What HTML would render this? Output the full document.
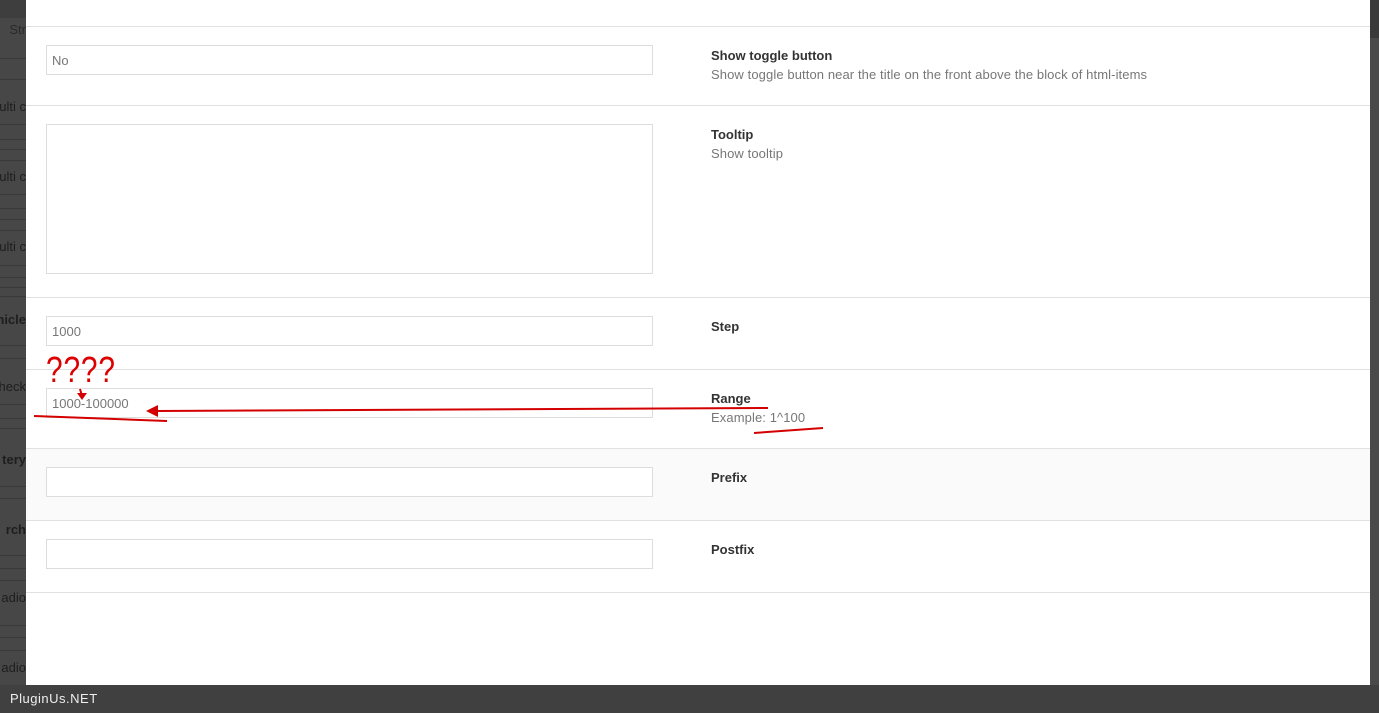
<!DOCTYPE html>
<html style="background:#474747"><head><meta charset="utf-8"><style>
*{margin:0;padding:0;box-sizing:border-box}
body{width:1379px;height:713px;overflow:hidden;background:#474747;font-family:"Liberation Sans",sans-serif;position:relative}
.l{position:absolute;left:0;width:26px;height:1px;background:#393939}
.lt{position:absolute;left:0;width:26px;font-size:13px;color:#1e1e1e;white-space:nowrap;overflow:hidden;direction:rtl;text-align:right}
.modal{position:absolute;left:26px;top:0;width:1344px;height:685px;background:#fff}
.sep{position:absolute;left:0;width:1344px;height:1px;background:#e1e1e1}
.in{position:absolute;left:20px;width:607px;height:30px;border:1px solid #ddd;background:#fff;font-size:13px;color:#777;padding:7px 5px}
.t{position:absolute;left:685px;font-size:13px;font-weight:bold;color:#333}
.d{position:absolute;left:685px;font-size:13px;color:#777;letter-spacing:0.1px}
.bar{position:absolute;left:0;top:685px;width:1379px;height:28px;background:#404040;color:#eee;font-size:13px;padding:6px 10px;letter-spacing:0.5px}
</style></head><body>
<div style="position:absolute;left:0;top:0;width:26px;height:685px;background-color:#474747"></div>
<div style="position:absolute;left:0;top:0;width:26px;height:18px;background:#3e3e3e"></div>
<div class="lt" style="top:22px;color:#2a2a2a">Str</div>
<div class="l" style="top:58px"></div><div class="l" style="top:79px"></div>
<div class="lt" style="top:99px">ulti c</div>
<div class="l" style="top:124px"></div><div class="l" style="top:139px"></div><div class="l" style="top:149px"></div><div class="l" style="top:160px"></div>
<div class="lt" style="top:169px">ulti c</div>
<div class="l" style="top:194px"></div><div class="l" style="top:208px"></div><div class="l" style="top:219px"></div><div class="l" style="top:230px"></div>
<div class="lt" style="top:239px">ulti c</div>
<div class="l" style="top:265px"></div><div class="l" style="top:277px"></div><div class="l" style="top:287px"></div><div class="l" style="top:296px"></div>
<div class="lt" style="top:312px;font-weight:bold">hicle</div>
<div class="l" style="top:345px"></div><div class="l" style="top:358px"></div>
<div class="lt" style="top:379px">heck</div>
<div class="l" style="top:404px"></div><div class="l" style="top:418px"></div><div class="l" style="top:428px"></div>
<div class="lt" style="top:452px;font-weight:bold">tery</div>
<div class="l" style="top:486px"></div><div class="l" style="top:498px"></div>
<div class="lt" style="top:522px;font-weight:bold">rch</div>
<div class="l" style="top:555px"></div><div class="l" style="top:568px"></div><div class="l" style="top:580px"></div>
<div class="lt" style="top:590px">adio</div>
<div class="l" style="top:625px"></div><div class="l" style="top:637px"></div><div class="l" style="top:650px"></div>
<div class="lt" style="top:660px">adio</div>
<div style="position:absolute;left:1370px;top:0;width:9px;height:685px;background:#4a4a4a"></div>
<div style="position:absolute;left:1370px;top:0;width:9px;height:38px;background:#3a3a3a"></div>
<div class="modal">
<div class="sep" style="top:26px"></div>
<div class="in" style="top:45px">No</div>
<div class="t" style="top:48px">Show toggle button</div>
<div class="d" style="top:67px">Show toggle button near the title on the front above the block of html-items</div>
<div class="sep" style="top:105px"></div>
<div class="in" style="top:124px;height:150px"></div>
<div class="t" style="top:127px">Tooltip</div>
<div class="d" style="top:146px">Show tooltip</div>
<div class="sep" style="top:297px"></div>
<div class="in" style="top:316px">1000</div>
<div class="t" style="top:319px">Step</div>
<div class="sep" style="top:369px"></div>
<div class="in" style="top:388px">1000-100000</div>
<div class="t" style="top:391px">Range</div>
<div class="d" style="top:410px">Example: 1^100</div>
<div style="position:absolute;left:0;top:448px;width:1344px;height:72px;background:#fafafa"></div>
<div class="sep" style="top:448px"></div>
<div class="in" style="top:467px"></div>
<div class="t" style="top:470px">Prefix</div>
<div class="sep" style="top:520px"></div>
<div class="in" style="top:539px"></div>
<div class="t" style="top:542px">Postfix</div>
<div class="sep" style="top:592px"></div>
</div>
<div style="position:absolute;left:46px;top:349px;font-size:36px;color:#d00;font-family:'Liberation Sans',sans-serif;letter-spacing:1px;transform:scaleX(0.83);transform-origin:left">????</div>
<svg style="position:absolute;left:0;top:0" width="1379" height="713">
<g stroke="#d40000" stroke-width="2" fill="#d40000">
<line x1="80" y1="389" x2="82" y2="396"/>
<polygon points="77,393 87,393 82,400" stroke="none"/>
<line x1="768" y1="408" x2="155" y2="411"/>
<polygon points="146,411 158,405 158,417" stroke="none"/>
<line x1="34" y1="416" x2="167" y2="421"/>
<line x1="754" y1="433" x2="823" y2="428"/>
</g></svg>
<div class="bar">PluginUs.NET</div>
</body></html>
